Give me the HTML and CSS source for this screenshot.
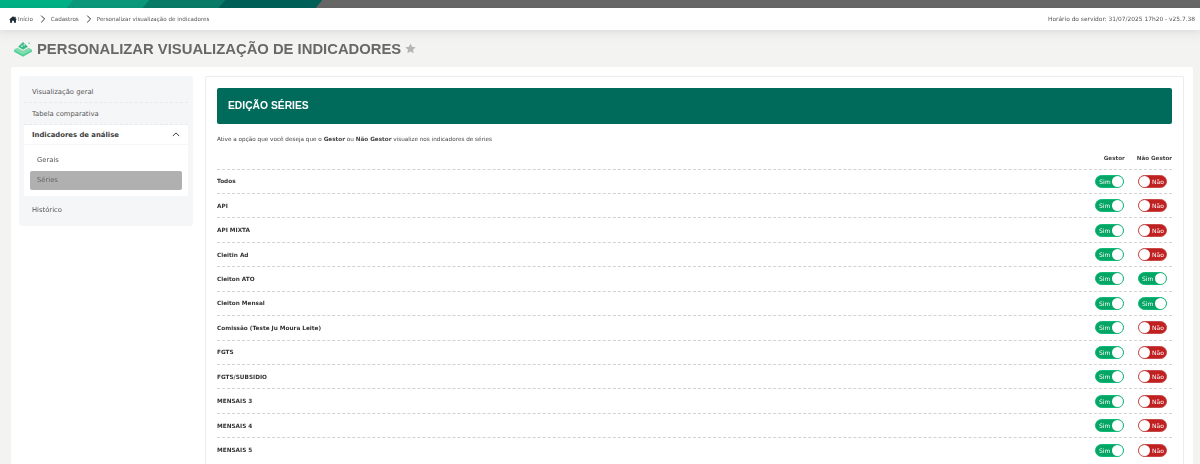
FILE: index.html
```html
<!DOCTYPE html>
<html lang="pt-BR">
<head>
<meta charset="utf-8">
<title>Personalizar visualização de indicadores</title>
<link rel="stylesheet" href="styles.css">
</head>
<body>
<div class="band"><i class="s1"></i><i class="s2"></i><i class="s3"></i><i class="s4"></i><i class="s5"></i></div>
<header class="crumbs">
  <nav class="trail">
    <svg class="home" viewBox="0 0 12 10"><path d="M6 0 0 5.2h1.6V10h3V6.8h2.8V10h3V5.2H12L10 3.4V.8H8.600v1.300z"/></svg>
    <span>Início</span>
    <svg class="chev" viewBox="0 0 6 8"><path d="M1.200.6 4.600 4 1.200 7.400"/></svg>
    <span>Cadastros</span>
    <svg class="chev" viewBox="0 0 6 8"><path d="M1.200.6 4.600 4 1.200 7.400"/></svg>
    <span>Personalizar visualização de indicadores</span>
  </nav>
  <div class="server">Horário do servidor: 31/07/2025 17h20 - v25.7.38</div>
</header>
<div class="title-row">
  <svg class="logo" viewBox="0 0 20 18">
    <path fill="#7fdcae" d="M0 9.500 3.500 7.700 10 11l6.500-3.300L20 9.500 10 15z"/>
    <path fill="#52cf97" d="M0 9.500 10 15l10-5.500v2.700L10 17.800 0 12.200z"/>
    <path fill="#3fb987" d="M4.500 6.400 10 1l5.500 5.400L10 9.800z"/>
    <path fill="#eafaf3" d="M8 5h1.600v1.600H8zm2.600-1.400h1.600v1.600h-1.600z"/>
    <circle cx="17" cy="2.500" r="1" fill="#7fdcae"/>
  </svg>
  <h1>PERSONALIZAR VISUALIZAÇÃO DE INDICADORES</h1>
  <svg class="star" viewBox="0 0 24 24"><path d="m12 1 3.400 7.300 7.900.9-5.900 5.400 1.600 7.900-7-4-7 4 1.600-7.900L.7 9.200l7.900-.9z"/></svg>
</div>
<main class="panel">
  <aside class="side">
    <a class="item">Visualização geral</a>
    <a class="item">Tabela comparativa</a>
    <div class="group">
      <div class="group-head"><b>Indicadores de análise</b>
        <svg class="up" viewBox="0 0 10 6"><path d="M1 5 5 1l4 4"/></svg>
      </div>
      <a class="sub">Gerais</a>
      <a class="sub active">Séries</a>
    </div>
    <a class="item last">Histórico</a>
  </aside>
  <section class="card">
    <div class="card-head">EDIÇÃO SÉRIES</div>
    <p class="intro">Ative a opção que você deseja que o <b>Gestor</b> ou <b>Não Gestor</b> visualize nos indicadores de séries</p>
    <div class="cols"><b class="c1">Gestor</b><b class="c2">Não Gestor</b></div>
    <div class="row"><b>Todos</b><div class="tg on">Sim</div><div class="tg off">Não</div></div>
    <div class="row"><b>API</b><div class="tg on">Sim</div><div class="tg off">Não</div></div>
    <div class="row"><b>API MIXTA</b><div class="tg on">Sim</div><div class="tg off">Não</div></div>
    <div class="row"><b>Cleitin Ad</b><div class="tg on">Sim</div><div class="tg off">Não</div></div>
    <div class="row"><b>Cleiton ATO</b><div class="tg on">Sim</div><div class="tg on">Sim</div></div>
    <div class="row"><b>Cleiton Mensal</b><div class="tg on">Sim</div><div class="tg on">Sim</div></div>
    <div class="row"><b>Comissão (Teste Ju Moura Leite)</b><div class="tg on">Sim</div><div class="tg off">Não</div></div>
    <div class="row"><b>FGTS</b><div class="tg on">Sim</div><div class="tg off">Não</div></div>
    <div class="row"><b>FGTS/SUBSIDIO</b><div class="tg on">Sim</div><div class="tg off">Não</div></div>
    <div class="row"><b>MENSAIS 3</b><div class="tg on">Sim</div><div class="tg off">Não</div></div>
    <div class="row"><b>MENSAIS 4</b><div class="tg on">Sim</div><div class="tg off">Não</div></div>
    <div class="row"><b>MENSAIS 5</b><div class="tg on">Sim</div><div class="tg off">Não</div></div>
  </section>
</main>
</body>
</html>
```
FILE: styles.css
```css
* { box-sizing: border-box; }
html, body { margin: 0; height: 464px; overflow: hidden; }
body {
  background: #f3f3f2;
  font-family: "DejaVu Sans", Verdana, sans-serif;
  color: #444;
  filter: blur(0.35px);
}
.band { display: flex; height: 8px; overflow: hidden; background: #666; }
.band i { display: block; height: 8px; transform: skewX(-40deg); margin-right: -1px; }
.band .s1 { width: 77px; margin-left: -6px; background: #00b085; }
.band .s2 { width: 77px; background: #0a977a; }
.band .s3 { width: 77px; background: #087a66; }
.band .s4 { width: 98px; background: #006058; }
.band .s5 { flex: 1; background: #666; }
.crumbs {
  height: 22px;
  background: #fff;
  display: flex;
  align-items: center;
  justify-content: space-between;
  padding: 0 5px 0 9px;
  font-size: 5.600px;
  color: #555;
  box-shadow: 0 2px 6px rgba(0,0,0,.06);
  position: relative;
}
.trail { display: flex; align-items: center; }
.home { width: 8px; height: 7px; fill: #1c2b33; margin-right: 1px; }
.chev { width: 6px; height: 8px; fill: none; stroke: #333; stroke-width: 1; margin: 0 5px 0 7px; }
.server { font-size: 5.900px; }
.title-row {
  height: 37px;
  display: flex;
  align-items: center;
  padding-left: 14px;
  background: linear-gradient(#ececec, #f3f3f2 14px);
}
.logo { width: 18px; height: 16px; margin-right: 5px; }
h1 {
  margin: 0;
  font: bold 14.800px "Liberation Sans", Arial, sans-serif;
  color: #686868;
}
.star { width: 11px; height: 11px; fill: #b5b5b5; margin-left: 4px; }
.panel {
  margin: 0 7px 0 11px;
  height: 397px;
  background: #fff;
  border-radius: 3px 3px 0 0;
  padding: 9px 9px 0 8px;
  display: flex;
  gap: 12px;
  align-items: flex-start;
  overflow: hidden;
}
.side {
  width: 174px;
  height: 150px;
  flex: none;
  background: #f5f6f8;
  border-radius: 3px;
  padding: 5px 5px 0;
  font-size: 6.800px;
  color: #555;
}
.side a { display: block; }
.item {
  height: 22px;
  line-height: 23px;
  padding-left: 8px;
  border-bottom: 1px dashed #e9eaec;
}
.item.last { border: 0; height: 28px; line-height: 29px; }
.group { background: #fff; height: 71px; padding-bottom: 5px; }
.group-head {
  height: 20px;
  padding: 0 8px;
  display: flex;
  align-items: center;
  justify-content: space-between;
  color: #3c3c3c;
  border-bottom: 1px solid #f6f6f6;
}
.group-head b { font-size: 6.850px; }
.up { width: 8px; height: 5px; fill: none; stroke: #333; stroke-width: 1.200; }
.sub { height: 19px; line-height: 19px; padding-left: 7px; margin: 0 6px; }
.group-head + .sub { margin-top: 6px; }
.sub.active { background: #b0b0b0; border-radius: 2px; color: #666; margin-top: 1px; }
.card {
  flex: 1;
  height: 388px;
  overflow: hidden;
  border: 1px solid #ededed;
  border-bottom: 0;
  border-radius: 2px 2px 0 0;
  padding: 11px 11px 0;
  font-size: 5.750px;
  color: #444;
}
.card-head {
  height: 36px;
  background: #006b5b;
  color: #fff;
  border-radius: 2px;
  padding-left: 11px;
  font: bold 10.300px/36px "Liberation Sans", Arial, sans-serif;
}
.intro { margin: 11px 0 0; height: 9px; line-height: 9px; font-size: 5.700px; }
.cols {
  display: flex;
  justify-content: flex-end;
  height: 14.500px;
  margin-top: 10px;
  font-size: 5.600px;
  line-height: 9px;
  color: #444;
}
.c2 { margin-left: 12px; }
.row {
  height: 24.450px;
  border-top: 1px dashed #d2d2d2;
  display: flex;
  align-items: center;
  padding-right: 5px;
  color: #333;
}
.row b { flex: 1; }
.tg {
  width: 29px;
  height: 13px;
  border-radius: 7px;
  margin-left: 14px;
  color: #fff;
  font-size: 6px;
  line-height: 12px;
  position: relative;
  border: 1px solid;
}
.tg::after {
  content: "";
  position: absolute;
  top: 0;
  width: 11px;
  height: 11px;
  border-radius: 50%;
  background: #fff;
}
.on { background: #04a565; border-color: #0fb977; padding-left: 3px; }
.on::after { right: 0; }
.off { background: #c0201f; border-color: #c64a49; padding-left: 13px; }
.off::after { left: 0; }
```
